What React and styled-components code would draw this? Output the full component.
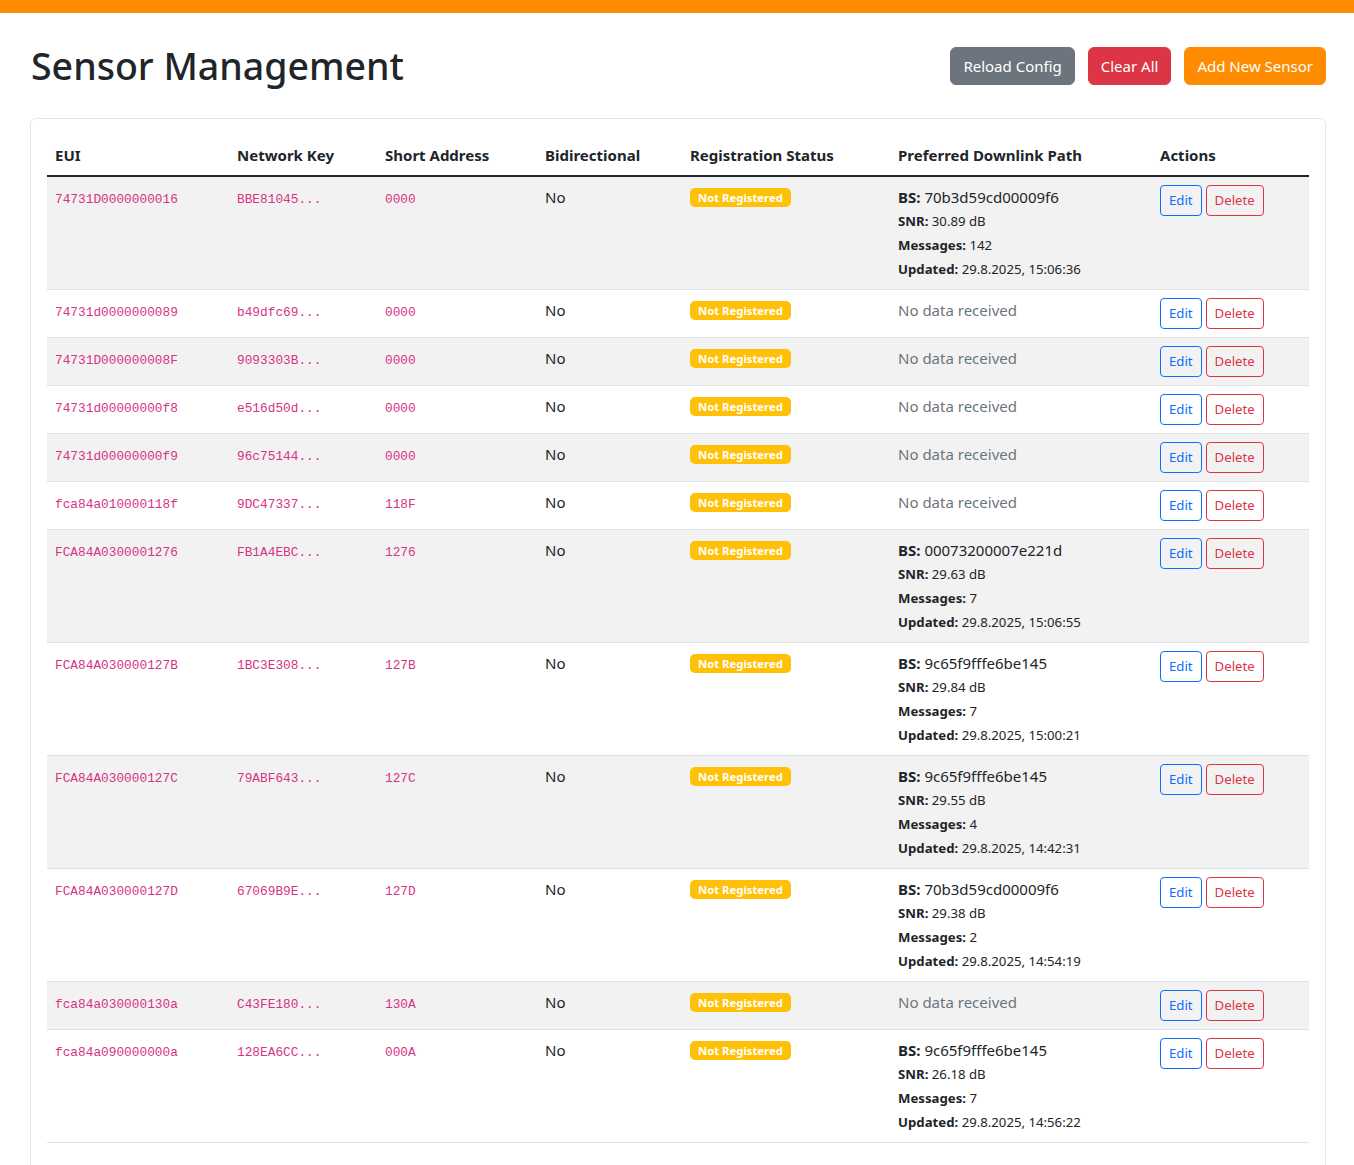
import React from 'react'
import styled, { createGlobalStyle } from 'styled-components'

const GlobalStyle = createGlobalStyle`
  body {
    margin: 0;
    font-family: "Segoe UI", "Noto Sans", "Liberation Sans", sans-serif;
    font-size: 15px;
    line-height: 24px;
    color: #212529;
    background: #fff;
  }
  * { box-sizing: border-box; }
`;

const sensors = [
  { eui: '74731D0000000016', key: 'BBE81045...', addr: '0000', path: { bs: '70b3d59cd00009f6', snr: '30.89', msgs: 142, updated: '29.8.2025, 15:06:36' } },
  { eui: '74731d0000000089', key: 'b49dfc69...', addr: '0000' },
  { eui: '74731D000000008F', key: '9093303B...', addr: '0000' },
  { eui: '74731d00000000f8', key: 'e516d50d...', addr: '0000' },
  { eui: '74731d00000000f9', key: '96c75144...', addr: '0000' },
  { eui: 'fca84a010000118f', key: '9DC47337...', addr: '118F' },
  { eui: 'FCA84A0300001276', key: 'FB1A4EBC...', addr: '1276', path: { bs: '00073200007e221d', snr: '29.63', msgs: 7, updated: '29.8.2025, 15:06:55' } },
  { eui: 'FCA84A030000127B', key: '1BC3E308...', addr: '127B', path: { bs: '9c65f9fffe6be145', snr: '29.84', msgs: 7, updated: '29.8.2025, 15:00:21' } },
  { eui: 'FCA84A030000127C', key: '79ABF643...', addr: '127C', path: { bs: '9c65f9fffe6be145', snr: '29.55', msgs: 4, updated: '29.8.2025, 14:42:31' } },
  { eui: 'FCA84A030000127D', key: '67069B9E...', addr: '127D', path: { bs: '70b3d59cd00009f6', snr: '29.38', msgs: 2, updated: '29.8.2025, 14:54:19' } },
  { eui: 'fca84a030000130a', key: 'C43FE180...', addr: '130A' },
  { eui: 'fca84a090000000a', key: '128EA6CC...', addr: '000A', path: { bs: '9c65f9fffe6be145', snr: '26.18', msgs: 7, updated: '29.8.2025, 14:56:22' } },
];

const columns = [
  ['EUI', 182],
  ['Network Key', 148],
  ['Short Address', 160],
  ['Bidirectional', 145],
  ['Registration Status', 208],
  ['Preferred Downlink Path', 262],
  ['Actions', 157],
];

const App = () => {
  return (
    <>
      <GlobalStyle />
      <TopBar />
      <Page>
        <Header>
          <Title>Sensor Management</Title>
          <HeaderActions>
            <Button $bg="#6c757d">Reload Config</Button>
            <Button $bg="#dc3545">Clear All</Button>
            <Button $bg="#ff8c00">Add New Sensor</Button>
          </HeaderActions>
        </Header>
        <Card>
          <Table>
            <colgroup>
              {columns.map(([name, w]) => <col key={name} width={w} />)}
            </colgroup>
            <thead>
              <tr>
                {columns.map(([name]) => <Th key={name}>{name}</Th>)}
              </tr>
            </thead>
            <tbody>
              {sensors.map((s, i) => (
                <Row key={s.eui} $striped={i % 2 === 0}>
                  <Td><Code>{s.eui}</Code></Td>
                  <Td><Code>{s.key}</Code></Td>
                  <Td><Code>{s.addr}</Code></Td>
                  <Td>No</Td>
                  <Td><Badge>Not Registered</Badge></Td>
                  <Td>
                    {s.path ? (
                      <>
                        <PathLine><strong>BS:</strong> {s.path.bs}</PathLine>
                        <PathLine $small><strong>SNR:</strong> {s.path.snr} dB</PathLine>
                        <PathLine $small><strong>Messages:</strong> {s.path.msgs}</PathLine>
                        <PathLine $small><strong>Updated:</strong> {s.path.updated}</PathLine>
                      </>
                    ) : (
                      <Muted>No data received</Muted>
                    )}
                  </Td>
                  <Td>
                    <RowActions>
                      <OutlineButton $color="#0d6efd">Edit</OutlineButton>
                      <OutlineButton $color="#dc3545">Delete</OutlineButton>
                    </RowActions>
                  </Td>
                </Row>
              ))}
            </tbody>
          </Table>
        </Card>
      </Page>
    </>
  )
}

const TopBar = styled.div`
  height: 13px;
  background: #ff8c00;
`;

const Page = styled.div`
  padding: 29px 28px 0 30px;
`;

const Header = styled.div`
  display: flex;
  align-items: center;
  justify-content: space-between;
  margin-bottom: 28px;
`;

const Title = styled.h1`
  margin: 0 0 0 1px;
  font-size: 37.5px;
  font-weight: 500;
  line-height: 48px;
`;

const HeaderActions = styled.div`
  display: flex;
  gap: 13px;
`;

const Button = styled.button`
  font-family: inherit;
  font-size: 15px;
  line-height: 24px;
  padding: 6px 12px;
  border: 1px solid ${p => p.$bg};
  border-radius: 6px;
  background: ${p => p.$bg};
  color: #fff;
  cursor: pointer;
`;

const Card = styled.div`
  border: 1px solid rgba(0, 0, 0, 0.1);
  border-radius: 6px;
  padding: 16px 16px 32px;
`;

const Table = styled.table`
  width: 100%;
  table-layout: fixed;
  border-collapse: collapse;
`;

const Th = styled.th`
  text-align: left;
  font-weight: 700;
  padding: 8px;
  border-bottom: 2px solid #212529;
`;

const Row = styled.tr`
  background: ${p => (p.$striped ? '#f2f2f2' : '#fff')};
  border-bottom: 1px solid #dee2e6;
`;

const Td = styled.td`
  padding: 8px;
  vertical-align: top;
`;

const Code = styled.code`
  font-family: "Liberation Mono", "DejaVu Sans Mono", monospace;
  font-size: 12.8px;
  line-height: 1;
  color: #d63384;
`;

const Badge = styled.span`
  display: inline-block;
  padding: 4px 8px;
  font-size: 11.3px;
  font-weight: 700;
  line-height: 11px;
  color: #fff;
  background: #ffc107;
  border-radius: 5px;
  vertical-align: 1px;
`;

const PathLine = styled.div`
  font-size: ${p => (p.$small ? '13.2px' : '15px')};
  line-height: 24px;
  height: 24px;
`;

const Muted = styled.span`
  color: #6c757d;
`;

const RowActions = styled.div`
  display: flex;
  gap: 4px;
`;

const OutlineButton = styled.button`
  font-family: inherit;
  font-size: 13.2px;
  line-height: 21px;
  padding: 4px 8px;
  border: 1px solid ${p => p.$color};
  border-radius: 4px;
  background: transparent;
  color: ${p => p.$color};
  cursor: pointer;
`;

export default App
